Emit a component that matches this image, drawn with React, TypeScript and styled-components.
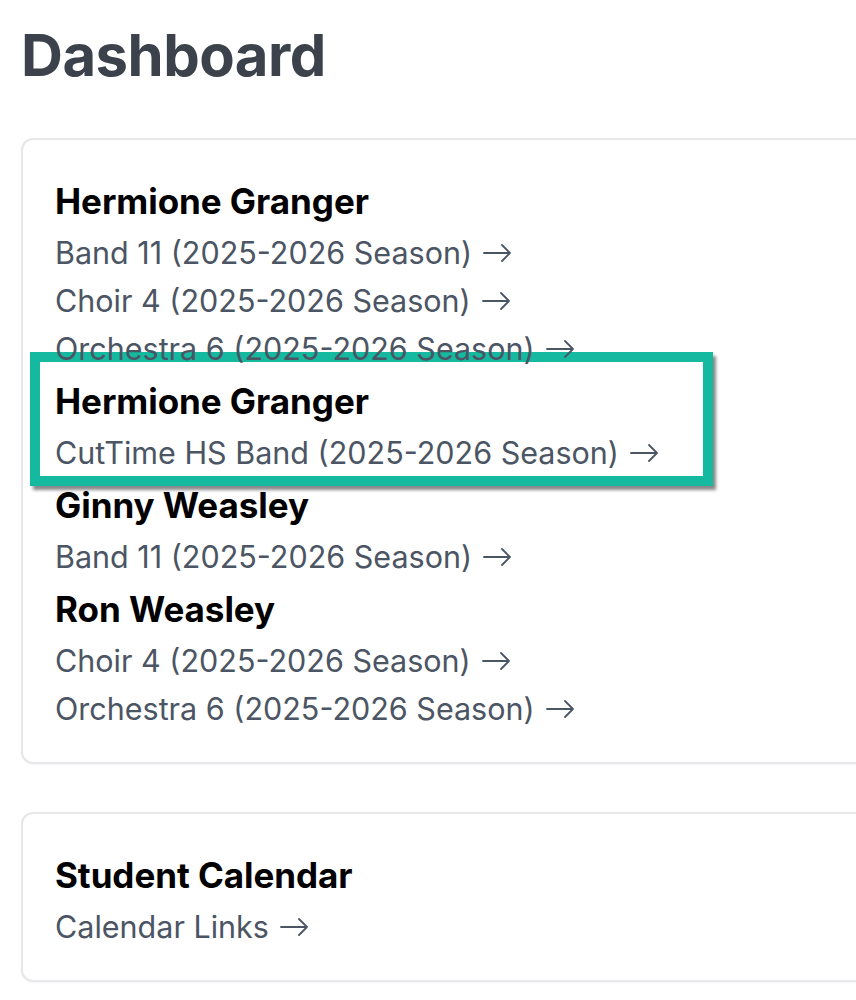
import styled, { createGlobalStyle } from 'styled-components';

const GlobalStyle = createGlobalStyle`
  html, body {
    margin: 0;
    padding: 0;
    background: #ffffff;
    overflow: hidden;
  }
  body {
    font-family: Inter, "Noto Sans", "Liberation Sans", sans-serif;
    -webkit-font-smoothing: antialiased;
  }
`;

const Page = styled.div`
  width: 1000px;
  padding: 25px 0 40px 21px;
  box-sizing: border-box;
`;

const Title = styled.h1`
  margin: 0 0 53px;
  font-size: 58px;
  line-height: 60px;
  font-weight: 700;
  letter-spacing: -0.5px;
  color: #3c424b;
`;

const Cards = styled.div`
  display: flex;
  flex-direction: column;
  gap: 48px;
`;

const Card = styled.section`
  width: 920px;
  box-sizing: border-box;
  border: 2px solid #e6e6eb;
  border-radius: 12px;
  background: #fff;
  padding: 33px 32px 29px;
  box-shadow: 0 1px 2px rgba(0, 0, 0, 0.04);
`;

const Group = styled.div`
  position: relative;
  display: flex;
  flex-direction: column;
  align-items: flex-start;
`;

const Name = styled.h3`
  position: relative;
  z-index: 2;
  margin: 0;
  font-size: 35px;
  line-height: 56px;
  font-weight: 700;
  letter-spacing: -0.05px;
  color: #000;
`;

const LinkRow = styled.a`
  position: relative;
  z-index: 2;
  display: inline-flex;
  align-items: center;
  gap: 11px;
  font-size: 30.5px;
  line-height: 48px;
  font-weight: 400;
  color: #4b5563;
  text-decoration: none;
`;

// annotation frame drawn over the second group
const Highlight = styled.div`
  position: absolute;
  z-index: 1;
  top: -21px;
  left: -25px;
  width: 683px;
  height: 134px;
  box-sizing: border-box;
  background: #fff;
  border: 10px solid #14b9a0;
  box-shadow: 3px 4px 3px rgba(40, 40, 40, 0.55);
`;

const Arrow = () => (
  <svg width="28" height="18" viewBox="0 0 28 18" fill="none" stroke="#4b5563" strokeWidth="1.8" strokeLinecap="round" strokeLinejoin="round">
    <path d="M1 9h26M19 1l8 8-8 8" />
  </svg>
);

type Student = { name: string; links: string[]; highlighted?: boolean };

const students: Student[] = [
  {
    name: 'Hermione Granger',
    links: ['Band 11 (2025-2026 Season)', 'Choir 4 (2025-2026 Season)', 'Orchestra 6 (2025-2026 Season)'],
  },
  { name: 'Hermione Granger', links: ['CutTime HS Band (2025-2026 Season)'], highlighted: true },
  { name: 'Ginny Weasley', links: ['Band 11 (2025-2026 Season)'] },
  { name: 'Ron Weasley', links: ['Choir 4 (2025-2026 Season)', 'Orchestra 6 (2025-2026 Season)'] },
];

const App = () => (
  <>
    <GlobalStyle />
    <Page>
      <Title>Dashboard</Title>
      <Cards>
        <Card>
          {students.map((s, i) => (
            <Group key={i}>
              {s.highlighted && <Highlight />}
              <Name>{s.name}</Name>
              {s.links.map((l) => (
                <LinkRow key={l} href="#">
                  {l}
                  <Arrow />
                </LinkRow>
              ))}
            </Group>
          ))}
        </Card>
        <Card>
          <Group>
            <Name>Student Calendar</Name>
            <LinkRow href="#">
              Calendar Links
              <Arrow />
            </LinkRow>
          </Group>
        </Card>
      </Cards>
    </Page>
  </>
);

export default App;
